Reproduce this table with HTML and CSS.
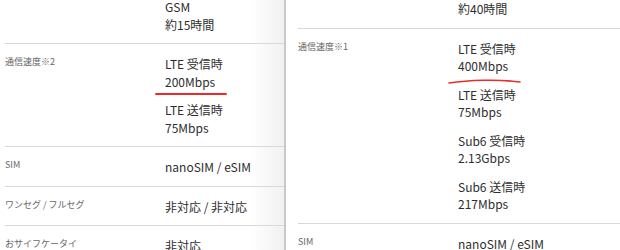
FILE: index.html
```html
<!DOCTYPE html>
<html lang="ja">
<head>
    <meta charset="UTF-8">
    <meta name="viewport" content="width=device-width, initial-scale=1.0">
    <title>スペック比較</title>
    <link rel="stylesheet" href="styles.css">
</head>
<body>
    <div class="compare">
        <!-- 左の機種 -->
        <div class="spec-panel spec-panel--left">
            <div class="spec-row spec-row--top">
                <div class="spec-label"></div>
                <div class="spec-value">
                    <p class="spec-group">GSM<br>約15時間</p>
                </div>
            </div>
            <div class="spec-row">
                <div class="spec-label">通信速度※2</div>
                <div class="spec-value">
                    <p class="spec-group marked">LTE 受信時<br>200Mbps
                        <svg class="mark mark--straight" width="72" height="6" viewBox="0 0 72 6">
                            <path d="M1 3 L71 3" stroke="#ee2a2a" stroke-width="2" fill="none" stroke-linecap="round"/>
                        </svg>
                    </p>
                    <p class="spec-group">LTE 送信時<br>75Mbps</p>
                </div>
            </div>
            <div class="spec-row">
                <div class="spec-label">SIM</div>
                <div class="spec-value">
                    <p class="spec-group">nanoSIM / eSIM</p>
                </div>
            </div>
            <div class="spec-row">
                <div class="spec-label">ワンセグ / フルセグ</div>
                <div class="spec-value">
                    <p class="spec-group">非対応 / 非対応</p>
                </div>
            </div>
            <div class="spec-row">
                <div class="spec-label">おサイフケータイ</div>
                <div class="spec-value">
                    <p class="spec-group">非対応</p>
                </div>
            </div>
        </div>

        <!-- 右の機種 -->
        <div class="spec-panel spec-panel--right">
            <div class="spec-row spec-row--top">
                <div class="spec-label"></div>
                <div class="spec-value">
                    <p class="spec-group">約40時間</p>
                </div>
            </div>
            <div class="spec-row">
                <div class="spec-label">通信速度※1</div>
                <div class="spec-value">
                    <p class="spec-group marked">LTE 受信時<br>400Mbps
                        <svg class="mark mark--curve" width="74" height="8" viewBox="0 0 74 8">
                            <path d="M1 5 C 20 2, 50 1, 72 4" stroke="#ee2a2a" stroke-width="1.6" fill="none" stroke-linecap="round"/>
                        </svg>
                    </p>
                    <p class="spec-group">LTE 送信時<br>75Mbps</p>
                    <p class="spec-group">Sub6 受信時<br>2.13Gbps</p>
                    <p class="spec-group">Sub6 送信時<br>217Mbps</p>
                </div>
            </div>
            <div class="spec-row">
                <div class="spec-label">SIM</div>
                <div class="spec-value">
                    <p class="spec-group">nanoSIM / eSIM</p>
                </div>
            </div>
        </div>
    </div>
</body>
</html>
```

FILE: styles.css
```css
body {
    margin: 0;
    background: #ffffff;
    font-family: "Noto Sans CJK JP", "Noto Sans", sans-serif;
    color: #333;
    overflow: hidden;
}
.compare {
    display: flex;
    height: 250px;
    align-items: flex-start;
    overflow: hidden;
}
.spec-panel {
    height: 100%;
    box-sizing: border-box;
    overflow: hidden;
}
.spec-panel--left {
    width: 286px;
    flex-shrink: 0;
    padding-left: 5px;
    border-right: 2px solid #c9c9c9;
    background: linear-gradient(to right, #ffffff 88%, #f1f1f1 100%);
}
.spec-panel--left .spec-row--top {
    margin-top: -2px;
}
.spec-panel--right {
    flex: 1;
    padding-left: 12px;
}
.spec-row {
    display: flex;
    padding: 11px 0 10px;
    border-bottom: 1px solid #d9d9d9;
}
.spec-row--top {
    padding-top: 0;
}
.spec-row:last-child {
    border-bottom: none;
}
.spec-label {
    width: 160px;
    flex-shrink: 0;
    font-size: 9px;
    line-height: 14px;
    color: #666;
}
.spec-value {
    flex: 1;
}
.spec-group {
    margin: 0;
    font-size: 12px;
    line-height: 17.5px;
    color: #2e2e2e;
}
.spec-group + .spec-group {
    margin-top: 11px;
}
.marked {
    position: relative;
}
/* 赤線のマーカー */
.mark {
    position: absolute;
    display: block;
}
.mark--straight {
    left: -10px;
    top: 36px;
}
.mark--curve {
    left: -10px;
    top: 38px;
}
```
